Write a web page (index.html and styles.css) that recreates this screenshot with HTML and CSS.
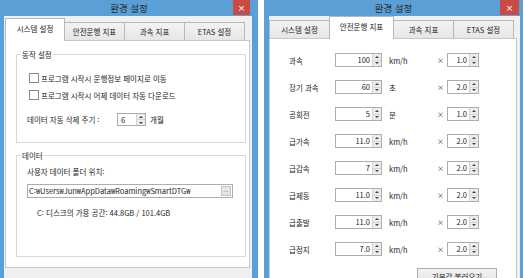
FILE: index.html
```html
<!DOCTYPE html>
<html lang="ko">
<head>
  <meta charset="UTF-8">
  <title>환경 설정</title>
  <link rel="stylesheet" href="styles.css">
</head>
<body>
  <div class="desktop">

    <!-- 시스템 설정 창 -->
    <div class="window window-left">
      <div class="titlebar">
        <span class="title">환경 설정</span>
        <span class="close">×</span>
      </div>
      <div class="window-body">
        <div class="tabs">
          <div class="tab active">시스템 설정</div>
          <div class="tab">안전운행 지표</div>
          <div class="tab">과속 지표</div>
          <div class="tab">ETAS 설정</div>
        </div>
        <div class="panel system-panel">
          <div class="group group-action">
            <span class="group-title">동작 설정</span>
            <label class="check-row"><span class="checkbox"></span>프로그램 시작시 운행정보 페이지로 이동</label>
            <label class="check-row second"><span class="checkbox"></span>프로그램 시작시 어제 데이터 자동 다운로드</label>
            <div class="delete-row">
              <span class="delete-label">데이터 자동 삭제 주기 :</span>
              <div class="spin spin-small">
                <span class="spin-value left">6</span>
                <span class="spin-btns"><span class="up"></span><span class="down"></span></span>
              </div>
              <span class="unit-month">개월</span>
            </div>
          </div>
          <div class="group group-data">
            <span class="group-title">데이터</span>
            <div class="folder-label">사용자 데이터 폴더 위치:</div>
            <div class="path-field">
              <span class="path-text">C:₩Users₩Jun₩AppData₩Roaming₩SmartDTG₩</span>
              <span class="browse">...</span>
            </div>
            <div class="disk-info">C: 디스크의 가용 공간: 44.8GB / 101.4GB</div>
          </div>
        </div>
      </div>
    </div>

    <!-- 안전운행 지표 창 -->
    <div class="window window-right">
      <div class="titlebar">
        <span class="title">환경 설정</span>
        <span class="close">×</span>
      </div>
      <div class="window-body">
        <div class="tabs">
          <div class="tab first">시스템 설정</div>
          <div class="tab active">안전운행 지표</div>
          <div class="tab">과속 지표</div>
          <div class="tab">ETAS 설정</div>
        </div>
        <div class="panel safety-panel">
          <div class="rule-row">
            <span class="rule-label">과속</span>
            <div class="spin spin-value-box"><span class="spin-value">100</span><span class="spin-btns"><span class="up"></span><span class="down"></span></span></div>
            <span class="rule-unit">km/h</span>
            <span class="times">×</span>
            <div class="spin spin-weight"><span class="spin-value">1.0</span><span class="spin-btns"><span class="up"></span><span class="down"></span></span></div>
          </div>
          <div class="rule-row">
            <span class="rule-label">장기 과속</span>
            <div class="spin spin-value-box"><span class="spin-value">60</span><span class="spin-btns"><span class="up"></span><span class="down"></span></span></div>
            <span class="rule-unit">초</span>
            <span class="times">×</span>
            <div class="spin spin-weight"><span class="spin-value">2.0</span><span class="spin-btns"><span class="up"></span><span class="down"></span></span></div>
          </div>
          <div class="rule-row">
            <span class="rule-label">공회전</span>
            <div class="spin spin-value-box"><span class="spin-value">5</span><span class="spin-btns"><span class="up"></span><span class="down"></span></span></div>
            <span class="rule-unit">분</span>
            <span class="times">×</span>
            <div class="spin spin-weight"><span class="spin-value">1.0</span><span class="spin-btns"><span class="up"></span><span class="down"></span></span></div>
          </div>
          <div class="rule-row">
            <span class="rule-label">급가속</span>
            <div class="spin spin-value-box"><span class="spin-value">11.0</span><span class="spin-btns"><span class="up"></span><span class="down"></span></span></div>
            <span class="rule-unit">km/h</span>
            <span class="times">×</span>
            <div class="spin spin-weight"><span class="spin-value">2.0</span><span class="spin-btns"><span class="up"></span><span class="down"></span></span></div>
          </div>
          <div class="rule-row">
            <span class="rule-label">급감속</span>
            <div class="spin spin-value-box"><span class="spin-value">7</span><span class="spin-btns"><span class="up"></span><span class="down"></span></span></div>
            <span class="rule-unit">km/h</span>
            <span class="times">×</span>
            <div class="spin spin-weight"><span class="spin-value">2.0</span><span class="spin-btns"><span class="up"></span><span class="down"></span></span></div>
          </div>
          <div class="rule-row">
            <span class="rule-label">급제동</span>
            <div class="spin spin-value-box"><span class="spin-value">11.0</span><span class="spin-btns"><span class="up"></span><span class="down"></span></span></div>
            <span class="rule-unit">km/h</span>
            <span class="times">×</span>
            <div class="spin spin-weight"><span class="spin-value">2.0</span><span class="spin-btns"><span class="up"></span><span class="down"></span></span></div>
          </div>
          <div class="rule-row">
            <span class="rule-label">급출발</span>
            <div class="spin spin-value-box"><span class="spin-value">11.0</span><span class="spin-btns"><span class="up"></span><span class="down"></span></span></div>
            <span class="rule-unit">km/h</span>
            <span class="times">×</span>
            <div class="spin spin-weight"><span class="spin-value">2.0</span><span class="spin-btns"><span class="up"></span><span class="down"></span></span></div>
          </div>
          <div class="rule-row">
            <span class="rule-label">급정지</span>
            <div class="spin spin-value-box"><span class="spin-value">7.0</span><span class="spin-btns"><span class="up"></span><span class="down"></span></span></div>
            <span class="rule-unit">km/h</span>
            <span class="times">×</span>
            <div class="spin spin-weight"><span class="spin-value">2.0</span><span class="spin-btns"><span class="up"></span><span class="down"></span></span></div>
          </div>
          <button class="default-btn">기본값 불러오기</button>
        </div>
      </div>
    </div>

  </div>
</body>
</html>
```

FILE: styles.css
```css
* {
  margin: 0;
  padding: 0;
  box-sizing: border-box;
}

body {
  background: #fff;
  font-family: "Noto Sans CJK KR", "Noto Sans", sans-serif;
  font-size: 7.5px;
  color: #1e1e1e;
  overflow: hidden;
}

.desktop {
  display: flex;
  gap: 6px;
  height: 278px;
}

/* window frame */
.window {
  display: flex;
  flex-direction: column;
  height: 278px;
  background: #5a9fd6;
}

.window-left { width: 258px; }
.window-right { width: 259px; }

.titlebar {
  position: relative;
  height: 16px;
  display: flex;
  align-items: center;
  justify-content: center;
  font-size: 9.5px;
  color: #2b2b2b;
}

.close {
  position: absolute;
  top: 0;
  height: 15px;
  background: #c94a42;
  color: #fff;
  font-family: "DejaVu Sans", sans-serif;
  font-size: 9px;
  display: flex;
  align-items: center;
  justify-content: center;
}

.window-left .close { right: 8px; width: 17px; }
.window-right .close { right: 4px; width: 19px; }

.window-body {
  flex: 1;
  display: flex;
  flex-direction: column;
  background: #f0f0f0;
  overflow: hidden;
}

.window-left .window-body { margin: 0 6px 0 4px; padding: 0 2px 0 1px; }
.window-right .window-body { margin: 0 3px 0 5px; padding: 0 3px 0 0; }

/* tabs */
.tabs {
  display: flex;
  align-items: flex-end;
  height: 24px;
}

.tab {
  width: 61px;
  height: 18px;
  margin-left: -1px;
  border: 1px solid #b8b8b8;
  border-bottom: none;
  background: linear-gradient(#f3f3f3, #e6e6e6);
  display: flex;
  align-items: center;
  justify-content: center;
  color: #222;
}

.tab:first-child { margin-left: 0; width: 60px; }
.window-right .tab.first { width: 61px; }

.tab.active {
  position: relative;
  z-index: 1;
  height: 23px;
  margin-bottom: -1px;
  padding-bottom: 3px;
  background: #fff;
}

.window-right .tab.active { width: 65px; }

.panel {
  background: #fff;
  border: 1px solid #c8c8c8;
}

/* system settings panel */
.system-panel {
  padding: 13px 3px 10px 10px;
}

.group {
  position: relative;
  border: 1px solid #d9d9d9;
  padding-left: 10px;
}

.group-title {
  position: absolute;
  top: -6px;
  left: 4px;
  padding: 0 1px;
  line-height: 11px;
  background: #fff;
}

.group-action {
  padding-top: 17px;
  padding-bottom: 16px;
}

.check-row {
  display: flex;
  align-items: center;
  height: 12px;
  padding-left: 2px;
}

.check-row.second { margin-top: 5px; }

.checkbox {
  width: 10px;
  height: 10px;
  margin-right: 2px;
  border: 1px solid #8a8a8a;
  background: #fff;
}

.delete-row {
  display: flex;
  align-items: center;
  margin-top: 12px;
}

.delete-label { width: 90px; }

.unit-month { margin-left: 4px; }

.group-data {
  margin-top: 12px;
  padding-top: 10px;
  padding-bottom: 37px;
}

.folder-label { line-height: 12px; }

.path-field {
  display: flex;
  align-items: center;
  width: 206px;
  height: 14px;
  margin-top: 6px;
  border: 1px solid #abadb3;
}

.path-text {
  flex: 1;
  padding-left: 1px;
  line-height: 12px;
  white-space: nowrap;
  overflow: hidden;
}

.browse {
  width: 10px;
  height: 10px;
  margin-right: 1px;
  border: 1px solid #c4c4c4;
  background: #e6e6e6;
  color: #777;
  font-size: 6px;
  line-height: 5px;
  text-align: center;
}

.disk-info {
  margin-top: 9px;
  padding-left: 10px;
  line-height: 12px;
}

/* spin boxes */
.spin {
  display: flex;
  height: 14px;
  border: 1px solid #abadb3;
  background: #fff;
}

.spin-small { width: 29px; height: 13px; }
.spin-value-box { width: 47px; }
.spin-weight { width: 32px; }

.spin-value {
  flex: 1;
  padding-right: 2px;
  text-align: right;
  line-height: 12px;
}

.spin-value.left {
  padding-left: 3px;
  text-align: left;
}

.spin-btns {
  display: flex;
  flex-direction: column;
  width: 9px;
  border-left: 1px solid #d4d4d4;
}

.spin-btns span {
  flex: 1;
  display: flex;
  align-items: center;
  justify-content: center;
  background: #ececec;
}

.spin-btns span + span { border-top: 1px solid #d4d4d4; }

.spin-btns .up::after,
.spin-btns .down::after {
  content: "";
  border-left: 2px solid transparent;
  border-right: 2px solid transparent;
}

.spin-btns .up::after { border-bottom: 2px solid #444; }
.spin-btns .down::after { border-top: 2px solid #444; }

/* safety rules panel */
.safety-panel {
  flex: 1;
  display: flex;
  flex-direction: column;
  gap: 13px;
  padding: 14px 0 0 19px;
}

.rule-row {
  display: flex;
  align-items: center;
}

.rule-label { width: 46px; }

.rule-unit {
  width: 55px;
  padding-left: 7px;
}

.times {
  width: 10px;
  font-size: 7px;
  color: #333;
}

.default-btn {
  align-self: flex-end;
  width: 80px;
  height: 16px;
  margin-top: -1px;
  margin-right: 19px;
  border: 1px solid #adadad;
  background: linear-gradient(#f3f3f3, #e4e4e4);
  font-family: "Noto Sans CJK KR", sans-serif;
  font-size: 7.5px;
  color: #222;
}
```
